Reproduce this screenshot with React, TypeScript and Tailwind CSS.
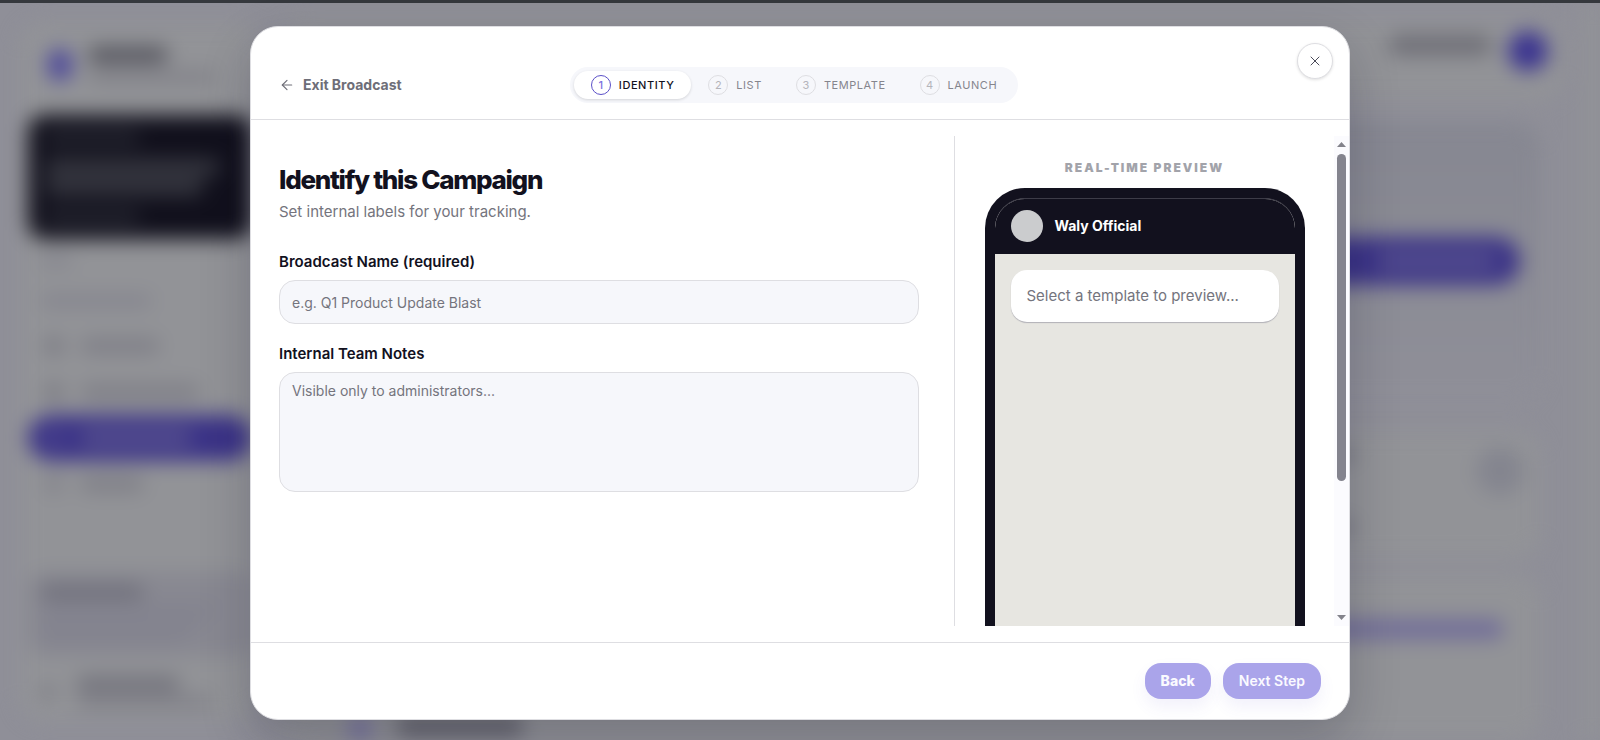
import type { ReactNode } from "react";
import { ArrowLeft, X } from "lucide-react";

const steps = ["Identity", "List", "Template", "Launch"];

function Bar({ className }: { className: string }) {
  return <div className={`shrink-0 rounded-full ${className}`} />;
}

function NavRow({ children, active = false }: { children: ReactNode; active?: boolean }) {
  return (
    <div
      className={
        active
          ? "flex h-[46px] shrink-0 items-center gap-4 rounded-full bg-[#3b3387] px-4"
          : "flex h-[46px] shrink-0 items-center gap-4 px-4"
      }
    >
      {children}
    </div>
  );
}

function Backdrop() {
  return (
    <div aria-hidden="true" className="absolute inset-0 overflow-hidden bg-[#8f8f98]">
      <div className="flex h-full gap-5 pl-5 blur-[10px]">
        <div className="my-5 flex w-60 shrink-0 flex-col rounded-3xl bg-[#929397] px-2">
          <div className="flex h-23 shrink-0 items-center gap-4 pb-2 pl-5">
            <Bar className="h-8 w-6 bg-[#4d489a]" />
            <div className="flex flex-col gap-2">
              <Bar className="h-4 w-20 bg-[#54545d]" />
              <Bar className="h-3 w-32 bg-[#808087]" />
            </div>
          </div>
          <div className="flex h-31 shrink-0 flex-col justify-between rounded-2xl bg-[#11101c] p-4">
            <Bar className="h-3 w-24 bg-[#292a34]" />
            <div className="flex flex-col gap-1">
              <Bar className="h-4 w-44 bg-[#383942]" />
              <Bar className="h-4 w-40 bg-[#383942]" />
            </div>
            <Bar className="h-3 w-24 bg-[#292a34]" />
          </div>
          <div className="flex shrink-0 flex-col gap-7 px-3 pt-4 pb-4">
            <Bar className="h-3 w-8 bg-[#85858e]" />
            <Bar className="h-3 w-28 bg-[#83838d]" />
          </div>
          <NavRow>
            <Bar className="size-5 bg-[#7b7b83]" />
            <Bar className="h-4 w-20 bg-[#7f7f87]" />
          </NavRow>
          <NavRow>
            <Bar className="size-5 bg-[#7b7b83]" />
            <Bar className="h-4 w-30 bg-[#7f7f87]" />
          </NavRow>
          <NavRow active>
            <Bar className="size-5 bg-[#4a438d]" />
            <Bar className="h-4 w-28 bg-[#58528f]" />
          </NavRow>
          <NavRow>
            <Bar className="size-5 bg-[#83838b]" />
            <Bar className="h-4 w-16 bg-[#7f7f87]" />
          </NavRow>
          <div className="mt-auto flex shrink-0 flex-col gap-1 rounded-2xl bg-[#888891] p-3">
            <Bar className="h-4 w-26 bg-[#71717c]" />
            <Bar className="h-3 w-44 bg-[#82828e]" />
            <Bar className="h-3 w-40 bg-[#82828e]" />
            <Bar className="h-2 w-36 bg-[#82828e]" />
          </div>
          <div className="flex shrink-0 items-center gap-5 px-3 pt-5 pb-3">
            <Bar className="size-4 bg-[#7c7c84]" />
            <div className="flex flex-col gap-1">
              <Bar className="h-4 w-26 bg-[#73737c]" />
              <Bar className="h-3 w-34 bg-[#7f7f87]" />
            </div>
          </div>
        </div>
        <div className="flex min-w-0 flex-1 flex-col pt-4">
          <div className="flex h-20 shrink-0 justify-end gap-4 rounded-3xl bg-[#929397] px-4 pt-3">
            <Bar className="mt-1 h-5 w-26 bg-[#6e6e76]" />
            <Bar className="size-10 bg-[#3b3490]" />
          </div>
          <div className="mt-6 mr-6 flex h-70 shrink-0 items-center justify-end rounded-3xl bg-linear-to-b from-[#868791] to-[#8f8f98] pr-5">
            <div className="mb-1 flex h-12 w-96 items-center justify-end rounded-full bg-[#3b3387] pr-6">
              <Bar className="h-4 w-30 bg-[#57518f]" />
            </div>
          </div>
          <div className="mt-7 mr-6 flex h-32 shrink-0 items-start justify-end gap-30 rounded-3xl bg-[#929397] px-4 pt-4">
            <div className="flex flex-col gap-14">
              <Bar className="h-4 w-40 bg-[#7c7c84]" />
              <Bar className="h-4 w-40 bg-[#7c7c84]" />
            </div>
            <Bar className="size-12 bg-[#84858f]" />
          </div>
          <div className="mt-4 mr-6 flex flex-1 items-start justify-between rounded-3xl bg-[#929397] px-9 pt-11">
            <div className="flex gap-6 self-end">
              <Bar className="ml-8 size-6 bg-[#7571a0]" />
              <Bar className="h-5 w-32 bg-[#62626b]" />
            </div>
            <Bar className="h-5 w-56 bg-[#716d98]" />
          </div>
        </div>
        <div className="w-4 shrink-0 bg-[#929397]" />
      </div>
    </div>
  );
}

function Stepper() {
  return (
    <ol className="flex items-center rounded-full bg-[#f6f7fb] p-1">
      {steps.map((step, i) => (
        <li
          key={step}
          aria-current={i === 0 ? "step" : undefined}
          className={
            i === 0
              ? "flex h-7 items-center gap-2 rounded-full bg-white px-[17px] text-[11px] font-medium tracking-wider text-[#12111e] uppercase shadow-[0_1px_3px_rgba(0,0,0,0.14)]"
              : "flex h-7 items-center gap-2 rounded-full px-[17px] text-[11px] tracking-wider text-[#85858d] uppercase"
          }
        >
          <span
            className={
              i === 0
                ? "flex size-5 items-center justify-center rounded-full border border-[#5b50c8] text-[11px] tracking-normal text-[#7a70e0]"
                : "flex size-5 items-center justify-center rounded-full border border-[#dedee2] text-[11px] tracking-normal text-[#b4b4ba]"
            }
          >
            {i + 1}
          </span>
          {step}
        </li>
      ))}
    </ol>
  );
}

function ScrollTrack() {
  return (
    <div aria-hidden="true" className="flex w-[15px] shrink-0 flex-col items-center bg-[#fbfbfe] py-1.5">
      <svg viewBox="0 0 9 5" className="h-[5px] w-[9px] shrink-0" fill="#83838b">
        <path d="M4.5 0 9 5H0z" />
      </svg>
      <div className="my-[7px] flex w-[9px] flex-1 flex-col">
        <div className="flex-[72] rounded-full bg-[#84848e]" />
        <div className="flex-[28]" />
      </div>
      <svg viewBox="0 0 9 5" className="h-[5px] w-[9px] shrink-0" fill="#83838b">
        <path d="M0 0h9L4.5 5z" />
      </svg>
    </div>
  );
}

function PhonePreview() {
  return (
    <section className="flex w-[380px] shrink-0 flex-col items-center gap-2.5 border-l border-[#dedee2] pt-[22px]">
      <h3 className="text-xs leading-5 font-black tracking-[2px] text-[#a2a3aa] uppercase">
        Real-Time Preview
      </h3>
      <div className="h-[640px] w-80 shrink-0 rounded-[40px] bg-[#12111e] p-2.5">
        <div className="flex h-full flex-col overflow-hidden rounded-[30px] border-t border-[#3d3c48] bg-[#e7e6e1]">
          <div className="-mt-px flex h-14 shrink-0 items-center gap-3 rounded-t-[30px] bg-[#12111e] px-4">
            <span className="size-8 rounded-full bg-[#cbccce]" />
            <span className="text-sm font-bold text-white">Waly Official</span>
          </div>
          <div className="p-4">
            <p className="rounded-2xl bg-white p-4 text-[15px] leading-5 text-[#74747d] shadow-[0_1px_1px_rgba(20,20,60,0.25)]">
              Select a template to preview...
            </p>
          </div>
        </div>
      </div>
    </section>
  );
}

export default function App() {
  return (
    <div className="relative flex h-screen flex-col overflow-hidden font-['Inter',sans-serif] text-[#12111e]">
      <div className="h-[3px] shrink-0 bg-[#35383d]" />
      <div className="relative flex min-h-0 flex-1 justify-center pt-[23px] pb-5">
        <Backdrop />
        <div
          role="dialog"
          aria-modal="true"
          aria-labelledby="dialog-title"
          className="relative flex w-full max-w-[1100px] flex-col rounded-[28px] border border-[#dedee2] bg-white shadow-[0_20px_50px_rgba(20,20,40,0.22)]"
        >
          <header className="flex shrink-0 items-center border-b border-[#dedee2] pt-10 pr-10 pb-4 pl-7">
            <div className="flex flex-1">
              <button
                type="button"
                className="flex items-center gap-2 text-sm font-bold text-[#6e6e78]"
              >
                <ArrowLeft className="size-4" strokeWidth={1.75} />
                Exit Broadcast
              </button>
            </div>
            <Stepper />
            <div className="flex-1" />
          </header>
          <button
            type="button"
            aria-label="Close"
            className="absolute top-4 right-4 flex size-9 items-center justify-center rounded-full border border-[#dedee2] bg-white text-[#4a4a58] shadow-[0_1px_3px_rgba(0,0,0,0.12)]"
          >
            <X className="size-4" strokeWidth={1.5} />
          </button>

          <div className="flex min-h-0 flex-1 py-4">
            <div className="flex min-w-0 flex-1 overflow-hidden">
              <form className="flex min-w-0 flex-1 flex-col pt-7 pr-[35px] pl-7">
                <h2 id="dialog-title" className="text-[26px] leading-8 font-extrabold tracking-tighter">
                  Identify this Campaign
                </h2>
                <p className="mt-1 text-[15px] leading-6 text-[#74747d]">
                  Set internal labels for your tracking.
                </p>
                <label htmlFor="broadcast-name" className="mt-7 text-[15px] leading-5 font-semibold">
                  Broadcast Name (required)
                </label>
                <input
                  id="broadcast-name"
                  type="text"
                  placeholder="e.g. Q1 Product Update Blast"
                  className="mt-2 h-11 w-full rounded-2xl border border-[#dedee2] bg-[#f6f7fb] px-3 text-sm placeholder:text-[#74747d]"
                />
                <label htmlFor="team-notes" className="mt-5 text-[15px] leading-5 font-semibold">
                  Internal Team Notes
                </label>
                <textarea
                  id="team-notes"
                  placeholder="Visible only to administrators..."
                  className="mt-2 h-30 w-full resize-none rounded-2xl border border-[#dedee2] bg-[#f6f7fb] px-3 py-2 text-sm leading-5 placeholder:text-[#74747d]"
                />
              </form>
              <PhonePreview />
            </div>
            <ScrollTrack />
          </div>

          <footer className="flex shrink-0 justify-end gap-3 border-t border-[#dedee2] px-7 py-5">
            <button
              type="button"
              className="h-9 rounded-2xl bg-[#aaa4ea] px-4 text-sm font-extrabold text-[#fafaff] shadow-[0_8px_16px_rgba(90,80,200,0.08)]"
            >
              Back
            </button>
            <button
              type="button"
              className="h-9 rounded-2xl bg-[#aaa4ea] px-4 text-sm font-semibold text-[#fafaff] shadow-[0_8px_16px_rgba(90,80,200,0.08)]"
            >
              Next Step
            </button>
          </footer>
        </div>
      </div>
    </div>
  );
}
